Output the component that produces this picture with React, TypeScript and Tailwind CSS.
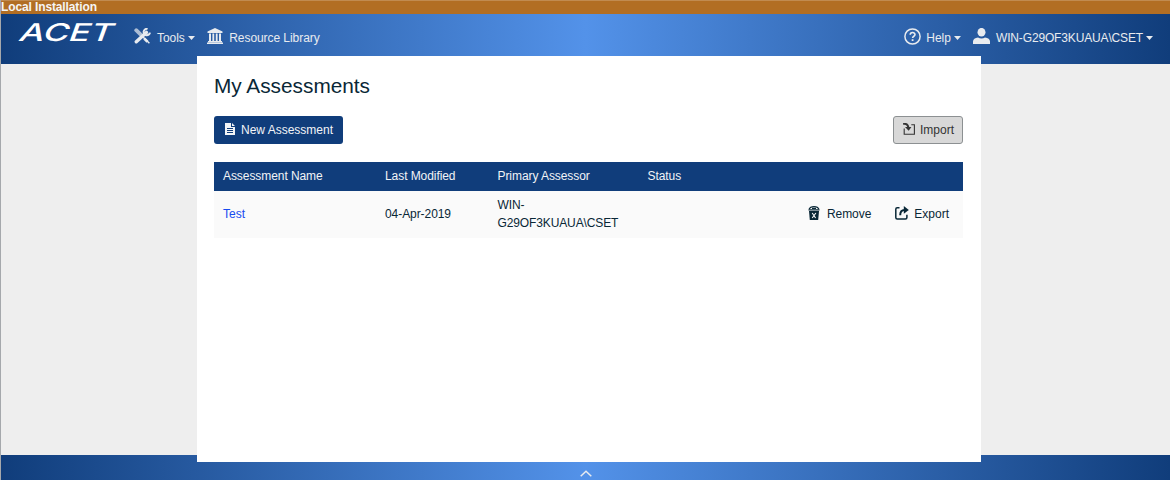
import React from "react";

function Caret() {
  return (
    <svg className="ml-[3px] h-1 w-[7px] shrink-0" viewBox="0 0 7 4" fill="currentColor">
      <path d="M0 0h7L3.5 4z" />
    </svg>
  );
}

function ToolsIcon() {
  return (
    <svg className="mb-[4px] h-4 w-[17px] shrink-0" viewBox="0 0 17 16" fill="none" stroke="currentColor">
      <path d="M2.2 2.2 7 6.8" strokeWidth="3.8" strokeLinecap="round" opacity=".7" />
      <path d="M7.5 7.5 15.4 15.2" strokeWidth="1.5" />
      <path d="M2.3 13.8 12.4 4.4" strokeWidth="3.4" strokeLinecap="round" />
      <path d="M13.6.9A3.2 3.2 0 1 0 16 4.6" strokeWidth="2" />
      <path d="M10.2 10.5 13.5 13.7" strokeWidth="2.6" />
    </svg>
  );
}

function LibraryIcon() {
  return (
    <svg className="mb-[4px] h-4 w-4 shrink-0" viewBox="0 0 16 16" fill="currentColor">
      <path d="M8 0 15.5 3.5V5H.5V3.5zM2 5.5h2V13H2zm3.4 0h1.8V13H5.4zm3.4 0h1.8V13H8.8zm3.2 0h2V13h-2zM1 13h14v1.2H1zM0 14.5h16V16H0z" />
    </svg>
  );
}

function HelpIcon() {
  return (
    <svg className="mb-[4px] h-[17px] w-[17px] shrink-0" viewBox="0 0 17 17" fill="none" stroke="currentColor">
      <circle cx="8.5" cy="8.5" r="7.6" strokeWidth="1.5" />
      <path d="M6.2 6.8c0-3 4.8-3 4.8-.2 0 1.7-2.4 1.6-2.4 3.5" strokeWidth="1.6" />
      <path d="M7.7 11.2h1.8v1.8H7.7z" fill="currentColor" stroke="none" />
    </svg>
  );
}

function UserIcon() {
  return (
    <svg className="mb-[4px] h-4 w-[17px] shrink-0" viewBox="0 0 17 16" fill="currentColor">
      <ellipse cx="8.5" cy="4.2" rx="4" ry="4.3" />
      <path d="M0 16v-2.5c0-2.4 2-3.6 5-4 2 1.2 5 1.2 7 0 3 .4 5 1.6 5 4V16z" />
    </svg>
  );
}

function DocumentIcon() {
  return (
    <svg className="h-3 w-[10px] shrink-0" viewBox="0 0 10 12" fill="currentColor">
      <path fillRule="evenodd" d="M0 0h6v4h4v8H0zM2 5v1h6V5zm0 2v1h6V7zm0 2v1h6V9zM7 0l3 3H7z" />
    </svg>
  );
}

function ImportIcon() {
  return (
    <svg className="h-3 w-3 shrink-0" viewBox="0 0 12 12" fill="none" stroke="currentColor">
      <path d="M1.2 5.5v5.8h10.2V1.7H8.3" strokeWidth="1.1" />
      <path d="M.2 1.1c3-.8 4.7.5 5.2 3.4" strokeWidth="2" />
      <path d="M2 4h6.4L5.7 7.8z" fill="currentColor" stroke="none" />
    </svg>
  );
}

function RemoveIcon() {
  return (
    <svg className="h-[14px] w-3 shrink-0" viewBox="0 0 12 14" fill="none" stroke="currentColor">
      <path d="M1.2 3.2C1.8 1.5 3.7.7 6 .7s4.2.8 4.8 2.5" strokeWidth="1.3" />
      <path d="M4 2.4h4M.5 3.9h11" strokeWidth="1.4" />
      <path d="M1 5h10l-.8 9H1.8z" fill="currentColor" stroke="none" />
      <path d="m4.2 7 3.4 5M7.9 7l-3.7 5" stroke="#fafafa" strokeWidth="1.1" />
    </svg>
  );
}

function ExportIcon() {
  return (
    <svg className="h-[14px] w-[14px] shrink-0" viewBox="0 0 14 14" fill="none" stroke="currentColor">
      <path d="M4.5 1.7H2.2Q.8 1.7.8 3.2v8.4q0 1.5 1.4 1.5h8.2q1.5 0 1.5-1.5V8.8" strokeWidth="1.5" />
      <path d="M5.2 9.2c0-3.6 1.3-5.2 4.4-5.2" strokeWidth="2" />
      <path d="M8.8 0 13.8 4 8.8 7.8z" fill="currentColor" stroke="none" />
    </svg>
  );
}

export default function App() {
  return (
    <div className="flex h-[480px] w-[1170px] flex-col overflow-hidden border-l border-[#a5a8ac] bg-[#eeeeee] font-['Liberation_Sans',Arial,sans-serif] text-[12px] text-[#092736]">
      <div className="h-[14px] shrink-0 border-t border-[#c18b50] bg-[#b26e23] text-[12px] leading-[13px] font-bold tracking-[-0.12px] text-[#f5f5f5]">
        Local Installation
      </div>

      <header className="flex h-[50px] shrink-0 items-start bg-linear-to-r/srgb from-[#103d7b] via-[#5392e9] to-[#103d7b] text-[#e8ebef]">
        <svg className="mt-[2px] ml-[10px] h-[34px] w-[114px] shrink-0 overflow-visible" viewBox="0 0 114 34">
          <text
            x="7" y="25" fill="#fff" fontSize="24.5" fontWeight="500"
            fontFamily="Inter, Arial, sans-serif"
            textLength="94" lengthAdjust="spacingAndGlyphs"
            transform="translate(8.5 0) skewX(-20)"
          >ACET</text>
        </svg>
        <div className="mt-[14px] ml-[9px] flex h-5 items-center">
          <ToolsIcon />
          <span className="ml-[6px] tracking-[-0.06px]">Tools</span>
          <Caret />
        </div>
        <div className="mt-[14px] ml-3 flex h-5 items-center">
          <LibraryIcon />
          <span className="ml-[6.5px] tracking-[-0.06px]">Resource Library</span>
        </div>
        <div className="mt-[14px] mr-[17px] ml-auto flex h-5 items-center">
          <HelpIcon />
          <span className="ml-[5px]">Help</span>
          <Caret />
          <span className="ml-3 flex"><UserIcon /></span>
          <span className="ml-[6px] tracking-[-0.15px]">WIN-G29OF3KUAUA\CSET</span>
          <Caret />
        </div>
      </header>

      <main className="relative z-10 -mt-2 ml-[196px] h-[406px] w-[784px] shrink-0 bg-white pr-[18px] pl-[17px]">
        <h1 className="pt-[16px] text-[20.8px] leading-7">My Assessments</h1>
        <div className="mt-4 flex h-7 justify-between">
          <button className="flex w-[129px] items-center rounded-[3px] bg-[#103d7b] pl-[11px] text-[#f2f4f7]">
            <span className="-mt-[3px]"><DocumentIcon /></span>
            <span className="ml-[6px]">New Assessment</span>
          </button>
          <button className="flex w-[70px] items-center rounded-[3px] border border-[#8c9092] bg-[#d8d8d8] pl-[9px] text-[#333]">
            <span className="-mt-[3px]"><ImportIcon /></span>
            <span className="ml-[5px]">Import</span>
          </button>
        </div>

        <div className="mt-[18px]">
          <div className="grid h-[29px] grid-cols-[162px_112.5px_150px_1fr] items-center bg-[#103d7b] pb-0.5 pl-[9px] tracking-[-0.07px] text-[#f2f4f7]">
            <span>Assessment Name</span>
            <span>Last Modified</span>
            <span>Primary Assessor</span>
            <span>Status</span>
          </div>
          <div className="grid h-[47px] grid-cols-[162px_112.5px_150px_1fr] items-center bg-[#fafafa] pb-0.5 pl-[9px]">
            <a className="text-[#174bf0]">Test</a>
            <span className="tracking-[-0.07px]">04-Apr-2019</span>
            <span className="leading-[18px] tracking-[-0.12px]">WIN-<br />G29OF3KUAUA\CSET</span>
            <div className="flex items-center justify-end pr-[14px]">
              <span className="-mt-[2px]"><RemoveIcon /></span>
              <span className="ml-[7px] tracking-[-0.05px]">Remove</span>
              <span className="-mt-[2px] ml-6"><ExportIcon /></span>
              <span className="ml-[5px]">Export</span>
            </div>
          </div>
        </div>
      </main>

      <footer className="-mt-[7px] flex h-[25px] shrink-0 justify-center bg-linear-to-r/srgb from-[#103d7b] via-[#5392e9] to-[#103d7b] pt-[15px]">
        <svg className="h-[7px] w-3" viewBox="0 0 12 7" fill="none" stroke="#e8ebef" strokeWidth="1.5">
          <path d="m.7 6.2 5.3-5 5.3 5" />
        </svg>
      </footer>
    </div>
  );
}
